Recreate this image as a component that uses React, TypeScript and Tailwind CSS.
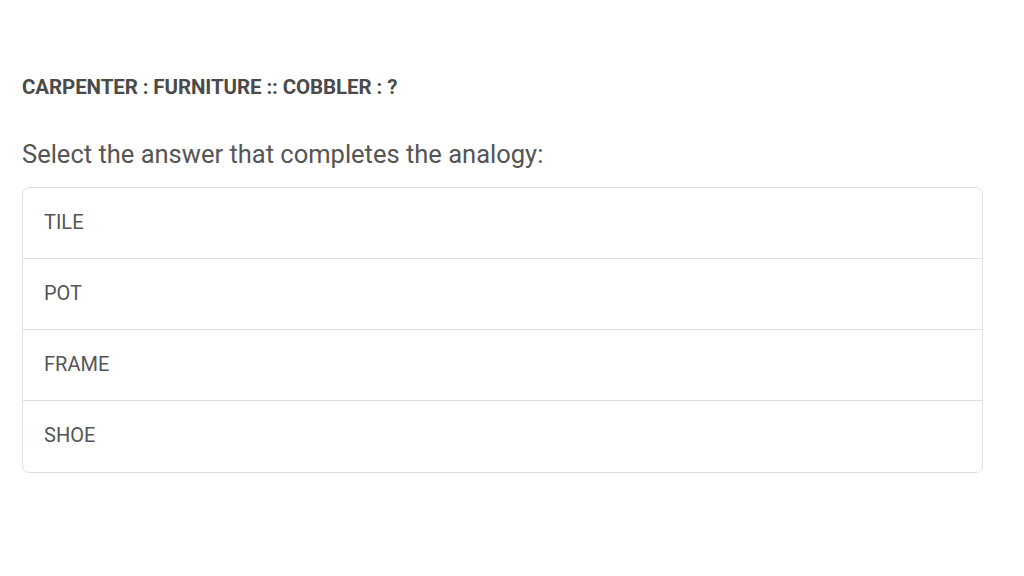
export default function App() {
  const options = ['TILE', 'POT', 'FRAME', 'SHOE'];

  return (
    <div className="min-h-screen w-full bg-white font-['Roboto',sans-serif] text-[#555]">
      <div className="pl-[22px] pr-[41px] pt-[73px]">
        {/* Question */}
        <h2 className="text-[20.5px] leading-[28px] font-bold tracking-[-0.1px] text-[#4a4a4a]">
          CARPENTER : FURNITURE :: COBBLER : ?
        </h2>
        <p className="mt-[36px] text-[25.5px] leading-[34px] text-[#555]">
          Select the answer that completes the analogy:
        </p>

        {/* Options */}
        <div className="mt-[16px] rounded-[7px] border border-[#e0e0e0] bg-white">
          {options.map((opt, idx) => (
            <div
              key={opt}
              className={`flex h-[71px] items-center px-[21px] pb-[3px] text-[20px] text-[#555] ${
                idx !== options.length - 1 ? 'border-b border-[#e0e0e0]' : ''
              }`}
            >
              {opt}
            </div>
          ))}
        </div>
      </div>
    </div>
  );
}
